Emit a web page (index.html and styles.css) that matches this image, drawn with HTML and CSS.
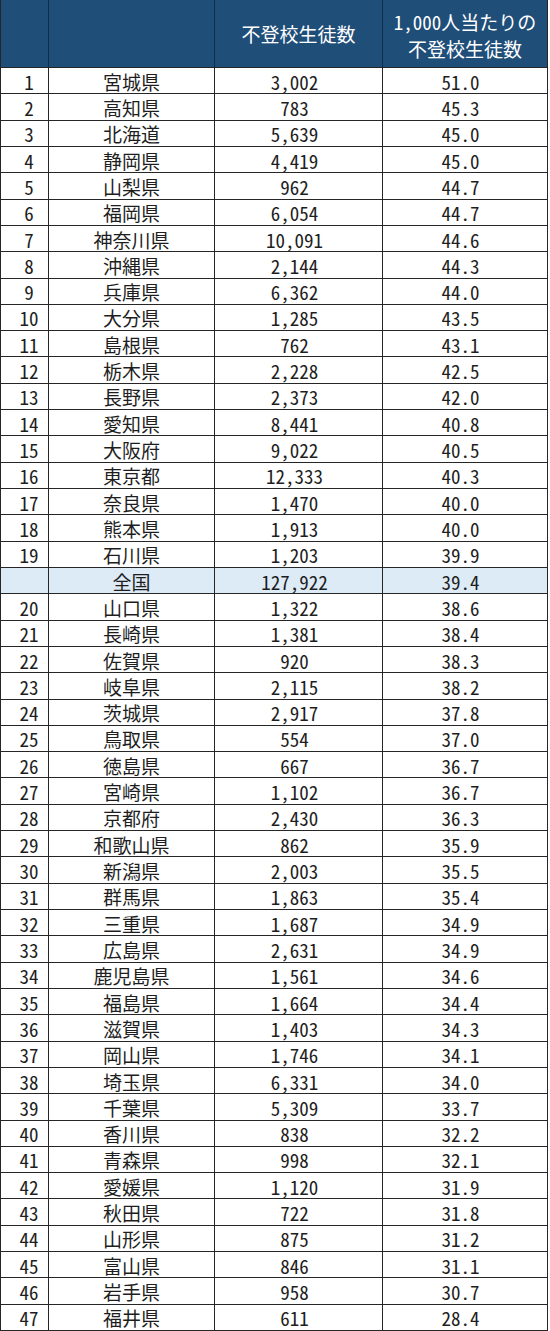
FILE: index.html
```html
<!DOCTYPE html>
<html lang="ja">
<head>
<meta charset="utf-8">
<title>不登校生徒数</title>
<link rel="stylesheet" href="styles.css">
</head>
<body>
<div class="table">
  <div class="row head">
    <div class="c rank"></div>
    <div class="c pref"></div>
    <div class="c cnt">不登校生徒数</div>
    <div class="c rate two"><span class="ln">1,000人当たりの</span><span class="ln">不登校生徒数</span></div>
  </div>
  <div class="row"><div class="c rank">1</div><div class="c pref">宮城県</div><div class="c cnt">3,002</div><div class="c rate">51.0</div></div>
  <div class="row"><div class="c rank">2</div><div class="c pref">高知県</div><div class="c cnt">783</div><div class="c rate">45.3</div></div>
  <div class="row"><div class="c rank">3</div><div class="c pref">北海道</div><div class="c cnt">5,639</div><div class="c rate">45.0</div></div>
  <div class="row"><div class="c rank">4</div><div class="c pref">静岡県</div><div class="c cnt">4,419</div><div class="c rate">45.0</div></div>
  <div class="row"><div class="c rank">5</div><div class="c pref">山梨県</div><div class="c cnt">962</div><div class="c rate">44.7</div></div>
  <div class="row"><div class="c rank">6</div><div class="c pref">福岡県</div><div class="c cnt">6,054</div><div class="c rate">44.7</div></div>
  <div class="row"><div class="c rank">7</div><div class="c pref">神奈川県</div><div class="c cnt">10,091</div><div class="c rate">44.6</div></div>
  <div class="row"><div class="c rank">8</div><div class="c pref">沖縄県</div><div class="c cnt">2,144</div><div class="c rate">44.3</div></div>
  <div class="row"><div class="c rank">9</div><div class="c pref">兵庫県</div><div class="c cnt">6,362</div><div class="c rate">44.0</div></div>
  <div class="row"><div class="c rank">10</div><div class="c pref">大分県</div><div class="c cnt">1,285</div><div class="c rate">43.5</div></div>
  <div class="row"><div class="c rank">11</div><div class="c pref">島根県</div><div class="c cnt">762</div><div class="c rate">43.1</div></div>
  <div class="row"><div class="c rank">12</div><div class="c pref">栃木県</div><div class="c cnt">2,228</div><div class="c rate">42.5</div></div>
  <div class="row"><div class="c rank">13</div><div class="c pref">長野県</div><div class="c cnt">2,373</div><div class="c rate">42.0</div></div>
  <div class="row"><div class="c rank">14</div><div class="c pref">愛知県</div><div class="c cnt">8,441</div><div class="c rate">40.8</div></div>
  <div class="row"><div class="c rank">15</div><div class="c pref">大阪府</div><div class="c cnt">9,022</div><div class="c rate">40.5</div></div>
  <div class="row"><div class="c rank">16</div><div class="c pref">東京都</div><div class="c cnt">12,333</div><div class="c rate">40.3</div></div>
  <div class="row"><div class="c rank">17</div><div class="c pref">奈良県</div><div class="c cnt">1,470</div><div class="c rate">40.0</div></div>
  <div class="row"><div class="c rank">18</div><div class="c pref">熊本県</div><div class="c cnt">1,913</div><div class="c rate">40.0</div></div>
  <div class="row"><div class="c rank">19</div><div class="c pref">石川県</div><div class="c cnt">1,203</div><div class="c rate">39.9</div></div>
  <div class="row total"><div class="c rank"></div><div class="c pref">全国</div><div class="c cnt">127,922</div><div class="c rate">39.4</div></div>
  <div class="row"><div class="c rank">20</div><div class="c pref">山口県</div><div class="c cnt">1,322</div><div class="c rate">38.6</div></div>
  <div class="row"><div class="c rank">21</div><div class="c pref">長崎県</div><div class="c cnt">1,381</div><div class="c rate">38.4</div></div>
  <div class="row"><div class="c rank">22</div><div class="c pref">佐賀県</div><div class="c cnt">920</div><div class="c rate">38.3</div></div>
  <div class="row"><div class="c rank">23</div><div class="c pref">岐阜県</div><div class="c cnt">2,115</div><div class="c rate">38.2</div></div>
  <div class="row"><div class="c rank">24</div><div class="c pref">茨城県</div><div class="c cnt">2,917</div><div class="c rate">37.8</div></div>
  <div class="row"><div class="c rank">25</div><div class="c pref">鳥取県</div><div class="c cnt">554</div><div class="c rate">37.0</div></div>
  <div class="row"><div class="c rank">26</div><div class="c pref">徳島県</div><div class="c cnt">667</div><div class="c rate">36.7</div></div>
  <div class="row"><div class="c rank">27</div><div class="c pref">宮崎県</div><div class="c cnt">1,102</div><div class="c rate">36.7</div></div>
  <div class="row"><div class="c rank">28</div><div class="c pref">京都府</div><div class="c cnt">2,430</div><div class="c rate">36.3</div></div>
  <div class="row"><div class="c rank">29</div><div class="c pref">和歌山県</div><div class="c cnt">862</div><div class="c rate">35.9</div></div>
  <div class="row"><div class="c rank">30</div><div class="c pref">新潟県</div><div class="c cnt">2,003</div><div class="c rate">35.5</div></div>
  <div class="row"><div class="c rank">31</div><div class="c pref">群馬県</div><div class="c cnt">1,863</div><div class="c rate">35.4</div></div>
  <div class="row"><div class="c rank">32</div><div class="c pref">三重県</div><div class="c cnt">1,687</div><div class="c rate">34.9</div></div>
  <div class="row"><div class="c rank">33</div><div class="c pref">広島県</div><div class="c cnt">2,631</div><div class="c rate">34.9</div></div>
  <div class="row"><div class="c rank">34</div><div class="c pref">鹿児島県</div><div class="c cnt">1,561</div><div class="c rate">34.6</div></div>
  <div class="row"><div class="c rank">35</div><div class="c pref">福島県</div><div class="c cnt">1,664</div><div class="c rate">34.4</div></div>
  <div class="row"><div class="c rank">36</div><div class="c pref">滋賀県</div><div class="c cnt">1,403</div><div class="c rate">34.3</div></div>
  <div class="row"><div class="c rank">37</div><div class="c pref">岡山県</div><div class="c cnt">1,746</div><div class="c rate">34.1</div></div>
  <div class="row"><div class="c rank">38</div><div class="c pref">埼玉県</div><div class="c cnt">6,331</div><div class="c rate">34.0</div></div>
  <div class="row"><div class="c rank">39</div><div class="c pref">千葉県</div><div class="c cnt">5,309</div><div class="c rate">33.7</div></div>
  <div class="row"><div class="c rank">40</div><div class="c pref">香川県</div><div class="c cnt">838</div><div class="c rate">32.2</div></div>
  <div class="row"><div class="c rank">41</div><div class="c pref">青森県</div><div class="c cnt">998</div><div class="c rate">32.1</div></div>
  <div class="row"><div class="c rank">42</div><div class="c pref">愛媛県</div><div class="c cnt">1,120</div><div class="c rate">31.9</div></div>
  <div class="row"><div class="c rank">43</div><div class="c pref">秋田県</div><div class="c cnt">722</div><div class="c rate">31.8</div></div>
  <div class="row"><div class="c rank">44</div><div class="c pref">山形県</div><div class="c cnt">875</div><div class="c rate">31.2</div></div>
  <div class="row"><div class="c rank">45</div><div class="c pref">富山県</div><div class="c cnt">846</div><div class="c rate">31.1</div></div>
  <div class="row"><div class="c rank">46</div><div class="c pref">岩手県</div><div class="c cnt">958</div><div class="c rate">30.7</div></div>
  <div class="row"><div class="c rank">47</div><div class="c pref">福井県</div><div class="c cnt">611</div><div class="c rate">28.4</div></div>
</div>
</body>
</html>
```
FILE: styles.css
```css
html, body {
  margin: 0;
  padding: 0;
  background: #ffffff;
}

.table {
  width: 548px;
  height: 1331px;
  box-sizing: border-box;
  display: flex;
  flex-direction: column;
  gap: 1px;
  background: #262626;
  border-left: 1px solid #262626;
  border-right: 1px solid #262626;
  border-bottom: 1px solid #262626;
  font-family: "Noto Sans CJK JP", "Noto Sans", sans-serif;
  font-feature-settings: "hwid" 1;
  font-size: 19px;
  color: #1e1e1e;
}

.row {
  flex: 1 1 0;
  display: grid;
  grid-template-columns: 47px 165px 167px 164px;
  gap: 1px;
  min-height: 0;
}

.row.head {
  flex: 0 0 67px;
  background: #132c47;
}

.c {
  background: #ffffff;
  display: flex;
  align-items: center;
  justify-content: center;
  line-height: 1;
  padding-top: 1px;
  white-space: nowrap;
}

.head .c {
  background: #1f4e79;
  color: #ffffff;
  padding-top: 0;
}

.head .two {
  flex-direction: column;
  line-height: 27px;
  padding-top: 2px;
}

.ln {
  display: block;
}

.total .c {
  background: #ddebf7;
}

.rank {
  padding-left: 9px;
}

.cnt {
  padding-right: 8px;
}

.rate {
  padding-right: 9px;
}

.head .cnt,
.head .rate {
  padding-right: 0;
}
```
